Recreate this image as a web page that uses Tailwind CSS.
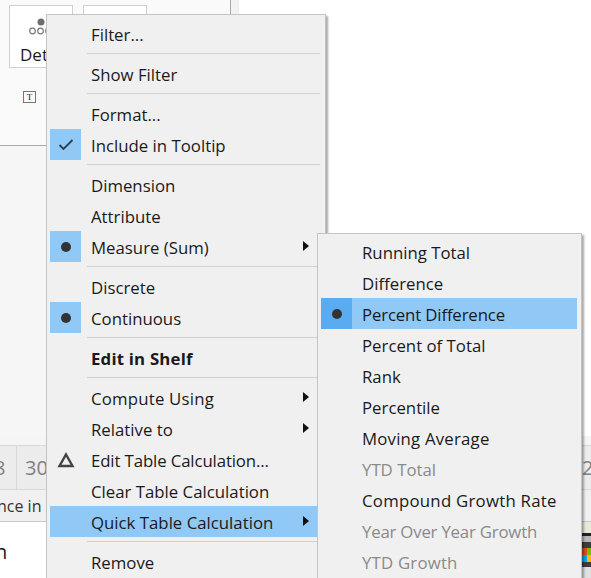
<!DOCTYPE html>
<html><head><meta charset="utf-8"><script src="https://cdn.jsdelivr.net/npm/@tailwindcss/browser@4"></script></head>
<body class="m-0">
<div class="relative w-[591px] h-[578px] overflow-hidden bg-white font-['Open_Sans',sans-serif] text-[16.8px] text-[#1a1a1a]">
  <div class="flex flex-col w-full h-full">
    <div class="flex h-[436px] shrink-0">
      <div class="w-[231px] h-full flex flex-col shrink-0 border-r border-[#a8a8a8]">
        <div class="h-[146px] bg-[#fafafa] border-b border-[#a8a8a8] pl-[9px] pt-[5px] shrink-0">
          <div class="flex gap-[10px]">
            <div class="w-[64px] h-[63px] border border-[#d0d0d0] bg-white flex flex-col pt-[10px] pl-[19px]">
              <svg width="28" height="20" viewBox="0 0 28 20"><circle cx="12" cy="6" r="3.5" fill="#6e6e6e"/><circle cx="3.5" cy="15" r="2.8" fill="none" stroke="#777" stroke-width="1.2"/><circle cx="11.5" cy="15" r="2.8" fill="none" stroke="#777" stroke-width="1.2"/><circle cx="19.5" cy="15" r="2.8" fill="none" stroke="#777" stroke-width="1.2"/></svg>
              <span class="text-[17px] leading-[20px] ml-[-9px] mt-[9px]">Det</span>
            </div>
            <div class="w-[64px] h-[63px] border border-[#d0d0d0] bg-white"></div>
          </div>
          <div class="ml-[14px] mt-[23px] w-[13px] h-[12px] border border-[#777] flex items-center justify-center text-[9px] leading-none font-['Liberation_Serif',serif]">T</div>
        </div>
        <div class="grow bg-[#f6f6f6]"></div>
      </div>
      <div class="w-[8px] h-full bg-[#f2f2f2] border-r border-[#ececec]"></div>
    </div>
    <div class="h-[9px] bg-[#f5f5f5] shrink-0"></div>
    <div class="h-[45px] bg-[#ececec] border-y border-[#d8d8d8] flex items-center justify-between text-[20px] text-[#808080] shrink-0">
      <div class="flex h-full items-center">
        <span class="w-[17px] h-full border-r border-[#d8d8d8] flex items-center overflow-hidden"><span class="ml-[-6px]">8</span></span>
        <span class="pl-[8px]">30</span>
      </div>
      <span class="w-[9px] overflow-hidden">2</span>
    </div>
    <div class="h-[32px] bg-[#f0f0f0] border-b border-[#c8c8c8] flex items-center overflow-hidden shrink-0 text-[16px] text-[#333]">
      <span class="ml-[-3px] whitespace-nowrap">nce in S</span>
    </div>
    <div class="grow flex justify-between">
      <span class="ml-[-5px] text-[20px] leading-[60px]">n</span>
      <div class="w-[9px] flex flex-col">
        <div class="h-[11px] bg-[#e9e9da]"></div>
        <div class="h-[3px] bg-[#222]"></div>
        <div class="h-[6px] bg-[#b8b8b8]"></div>
        <div class="h-[6px] bg-[#3c3c3c]"></div>
        <div class="h-[14px] grid grid-cols-2 grid-rows-2">
          <div class="bg-[#d84a20]"></div><div class="bg-[#7fba00]"></div><div class="bg-[#00a4ef]"></div><div class="bg-[#ffb900]"></div>
        </div>
        <div class="h-[5px] bg-[#3c3c3c]"></div>
        <div class="h-[11px] bg-[#e0e0e0]"></div>
      </div>
    </div>
  </div>

  <!-- main menu -->
  <div class="absolute left-[46px] top-[14px] w-[280px] h-[580px] bg-[#f0f0f0] border border-[#c4c4c4] shadow-[2px_2px_2px_rgba(0,0,0,0.35)] pt-[3px] pl-[3px] pr-[8px]">
    <div class="flex items-center h-[31px] pl-[41px] pt-[2px]">Filter...</div>
    <div class="h-[9px] ml-[37px] mr-[-3px] pt-[4px]"><div class="h-px bg-[#d0d0d0]"></div></div>
    <div class="flex items-center h-[31px] pl-[41px] pt-[2px]">Show Filter</div>
    <div class="h-[9px] ml-[37px] mr-[-3px] pt-[4px]"><div class="h-px bg-[#d0d0d0]"></div></div>
    <div class="flex items-center h-[31px] pl-[41px] pt-[2px]">Format...</div>
    <div class="flex items-center h-[31px]">
      <div class="w-[31px] h-full bg-[#90c8f6] flex items-center justify-center"><svg width="16" height="13" viewBox="0 0 16 13"><path d="M1.5 7 L5.5 11 L14.5 2" fill="none" stroke="#2c3e50" stroke-width="1.8"/></svg></div>
      <span class="pl-[10px] mt-[2px]">Include in Tooltip</span>
    </div>
    <div class="h-[9px] ml-[37px] mr-[-3px] pt-[4px]"><div class="h-px bg-[#d0d0d0]"></div></div>
    <div class="flex items-center h-[31px] pl-[41px] pt-[2px]">Dimension</div>
    <div class="flex items-center h-[31px] pl-[41px] pt-[2px]">Attribute</div>
    <div class="flex items-center h-[31px] relative">
      <div class="w-[31px] h-full bg-[#90c8f6] flex items-center justify-center"><div class="w-[10px] h-[10px] rounded-full bg-[#333]"></div></div>
      <span class="pl-[10px] mt-[2px]">Measure (Sum)</span>
      <svg width="6" height="10" viewBox="0 0 6 10" class="absolute right-[8px] top-[10px]"><path d="M0 0 L6 5 L0 10 Z" fill="#111"/></svg>
    </div>
    <div class="h-[9px] ml-[37px] mr-[-3px] pt-[4px]"><div class="h-px bg-[#d0d0d0]"></div></div>
    <div class="flex items-center h-[31px] pl-[41px] pt-[2px]">Discrete</div>
    <div class="flex items-center h-[31px]">
      <div class="w-[31px] h-full bg-[#90c8f6] flex items-center justify-center"><div class="w-[10px] h-[10px] rounded-full bg-[#333]"></div></div>
      <span class="pl-[10px] mt-[2px]">Continuous</span>
    </div>
    <div class="h-[9px] ml-[37px] mr-[-3px] pt-[4px]"><div class="h-px bg-[#d0d0d0]"></div></div>
    <div class="flex items-center h-[31px] pl-[41px] pt-[2px] font-bold tracking-[0.2px]">Edit in Shelf</div>
    <div class="h-[9px] ml-[37px] mr-[-3px] pt-[4px]"><div class="h-px bg-[#d0d0d0]"></div></div>
    <div class="flex items-center h-[31px] pl-[41px] pt-[2px] relative tracking-[0.2px]">Compute Using<svg width="6" height="10" viewBox="0 0 6 10" class="absolute right-[8px] top-[10px]"><path d="M0 0 L6 5 L0 10 Z" fill="#111"/></svg></div>
    <div class="flex items-center h-[31px] pl-[41px] pt-[2px] relative">Relative to<svg width="6" height="10" viewBox="0 0 6 10" class="absolute right-[8px] top-[10px]"><path d="M0 0 L6 5 L0 10 Z" fill="#111"/></svg></div>
    <div class="flex items-center h-[31px]">
      <div class="w-[31px] h-full flex items-center justify-center"><svg width="18" height="16" viewBox="0 0 18 16"><path d="M9 2.5 L15.5 14 L2.5 14 Z" fill="none" stroke="#444" stroke-width="2.4"/></svg></div>
      <span class="pl-[10px] mt-[2px] tracking-[-0.12px]">Edit Table Calculation...</span>
    </div>
    <div class="flex items-center h-[31px] pl-[41px] pt-[2px]">Clear Table Calculation</div>
    <div class="flex items-center h-[31px] pl-[41px] pt-[2px] bg-[#90c8f6] relative">Quick Table Calculation<svg width="6" height="10" viewBox="0 0 6 10" class="absolute right-[8px] top-[10px]"><path d="M0 0 L6 5 L0 10 Z" fill="#111"/></svg></div>
    <div class="h-[9px] ml-[37px] mr-[-3px] pt-[4px]"><div class="h-px bg-[#d0d0d0]"></div></div>
    <div class="flex items-center h-[31px] pl-[41px] pt-[2px]">Remove</div>
  </div>

  <!-- submenu -->
  <div class="absolute left-[317px] top-[233px] w-[265px] h-[360px] bg-[#f0f0f0] border border-[#c4c4c4] shadow-[2px_2px_2px_rgba(0,0,0,0.35)] pt-[2px] pl-[3px] pr-[4px]">
    <div class="flex items-center h-[31px] pl-[41px] pt-[2px]">Running Total</div>
    <div class="flex items-center h-[31px] pl-[41px] pt-[2px]">Difference</div>
    <div class="flex items-center h-[31px] bg-[#90c8f6]">
      <div class="w-[31px] h-full bg-[#5aabf0] flex items-center justify-center"><div class="w-[10px] h-[10px] rounded-full bg-[#333]"></div></div>
      <span class="pl-[10px] mt-[2px] tracking-[-0.15px]">Percent Difference</span>
    </div>
    <div class="flex items-center h-[31px] pl-[41px] pt-[2px]">Percent of Total</div>
    <div class="flex items-center h-[31px] pl-[41px] pt-[2px]">Rank</div>
    <div class="flex items-center h-[31px] pl-[41px] pt-[2px]">Percentile</div>
    <div class="flex items-center h-[31px] pl-[41px] pt-[2px] tracking-[0.2px]">Moving Average</div>
    <div class="flex items-center h-[31px] pl-[41px] pt-[2px] text-[#8a8a8a]">YTD Total</div>
    <div class="flex items-center h-[31px] pl-[41px] pt-[2px] tracking-[0.25px]">Compound Growth Rate</div>
    <div class="flex items-center h-[31px] pl-[41px] pt-[2px] text-[#8a8a8a] tracking-[-0.2px]">Year Over Year Growth</div>
    <div class="flex items-center h-[31px] pl-[41px] pt-[2px] text-[#8a8a8a] tracking-[0.2px]">YTD Growth</div>
  </div>
</div>
</body></html>
